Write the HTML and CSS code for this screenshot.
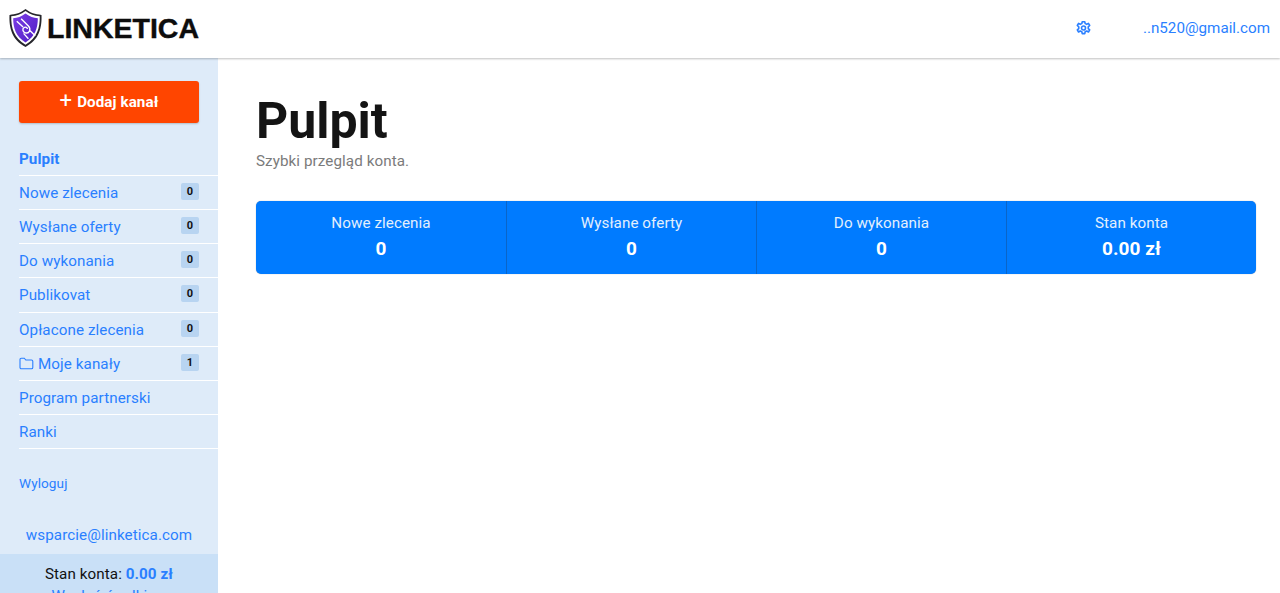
FILE: index.html
```html
<!DOCTYPE html>
<html lang="pl">
<head>
<meta charset="utf-8">
<title>Linketica - Pulpit</title>
<link rel="stylesheet" href="styles.css">
</head>
<body>
<header class="topbar">
  <a class="logo" href="#">
    <svg class="logo-mark" width="33" height="40" viewBox="0 0 34 40" aria-hidden="true">
      <defs><linearGradient id="sg" x1="0" y1="0" x2="1" y2="1"><stop offset="0" stop-color="#7c3fe6"/><stop offset="1" stop-color="#4f1cc4"/></linearGradient></defs>
      <path d="M17 .5 C22 4.500 27 6 33.500 6.500 C34 20 31 32 17 39.500 C3 32 0 20 .5 6.500 C7 6 12 4.500 17 .5Z" fill="#26262c"/>
      <path d="M17 2.500 C22 6 26 7.500 31.700 8 C31.900 20 29 30.500 17 37.300 C5 30.500 2.100 20 2.300 8 C8 7.500 12 6 17 2.500Z" fill="#fff"/>
      <path d="M17 5 C21.500 8.300 25 9.500 29.700 10 C29.700 20 27 28.700 17 35 C7 28.700 4.300 20 4.300 10 C9 9.500 12.500 8.300 17 5Z" fill="url(#sg)"/>
      <path d="M8 13 L14.500 19 M12.500 10.500 L20 18 C23 21 21 26 17 25 C14 24.300 13.500 21 15.500 19.500 C17 18.500 19 19.500 19 21 M21 22 L27 28 M15 25.500 L20 31" fill="none" stroke="#fff" stroke-width="1.400"/>
    </svg>
    <span class="logo-text">LINKETICA</span>
  </a>
  <div class="top-right">
    <svg class="gear" width="15" height="16" viewBox="0 0 24 24" fill="none" stroke="#2a7fff" stroke-width="2.600" stroke-linejoin="round" aria-hidden="true">
      <circle cx="12" cy="12" r="3.200"/>
      <path d="M10 2h4l.7 3 2.500 1.100 2.700-1.500 2 3.400-2.300 2.100v2.800l2.300 2.100-2 3.400-2.700-1.500-2.500 1.100-.7 3h-4l-.7-3-2.500-1.100-2.700 1.500-2-3.400 2.300-2.100v-2.800L2.100 8l2-3.400 2.700 1.500L9.300 5z"/>
    </svg>
    <a class="user-mail" href="#">..n520@gmail.com</a>
  </div>
</header>
<div class="layout">
  <aside class="sidebar">
    <a class="add-btn" href="#"><span class="plus">+</span> Dodaj kanał</a>
    <nav class="nav">
      <a class="nav-item active" href="#">Pulpit</a>
      <a class="nav-item" href="#">Nowe zlecenia<span class="badge">0</span></a>
      <a class="nav-item" href="#">Wysłane oferty<span class="badge">0</span></a>
      <a class="nav-item" href="#">Do wykonania<span class="badge">0</span></a>
      <a class="nav-item" href="#">Publikovat<span class="badge">0</span></a>
      <a class="nav-item" href="#">Opłacone zlecenia<span class="badge">0</span></a>
      <a class="nav-item" href="#">
        <span class="with-icon">
          <svg width="15" height="13" viewBox="0 0 15 13" fill="none" stroke="#2a7fff" stroke-width="1.100" aria-hidden="true"><path d="M1 2.500a1.300 1.300 0 0 1 1.300-1.300h3l1.500 1.800h5.700A1.300 1.300 0 0 1 13.800 4.300v6.200a1.300 1.300 0 0 1-1.300 1.300H2.300A1.300 1.300 0 0 1 1 10.500z"/></svg>
          Moje kanały
        </span><span class="badge">1</span>
      </a>
      <a class="nav-item" href="#">Program partnerski</a>
      <a class="nav-item" href="#">Ranki</a>
    </nav>
    <a class="logout" href="#">Wyloguj</a>
    <a class="support" href="#">wsparcie@linketica.com</a>
    <div class="balance">
      <div>Stan konta: <strong>0.00 zł</strong></div>
      <a class="withdraw" href="#">Wypłać środki →</a>
    </div>
  </aside>
  <main class="content">
    <h1 class="title">Pulpit</h1>
    <p class="subtitle">Szybki przegląd konta.</p>
    <section class="stats">
      <div class="stat"><div class="stat-label">Nowe zlecenia</div><div class="stat-value">0</div></div>
      <div class="stat"><div class="stat-label">Wysłane oferty</div><div class="stat-value">0</div></div>
      <div class="stat"><div class="stat-label">Do wykonania</div><div class="stat-value">0</div></div>
      <div class="stat"><div class="stat-label">Stan konta</div><div class="stat-value">0.00 zł</div></div>
    </section>
  </main>
</div>
</body>
</html>
```

FILE: styles.css
```css
* { box-sizing: border-box; }
html, body { margin: 0; height: 593px; overflow: hidden; }
body { font-family: Roboto, "Noto Sans", sans-serif; font-size: 15.200px; letter-spacing: .08px; color: #111; background: #fff; }
a { color: #2a7fff; text-decoration: none; }

.topbar { position: relative; z-index: 2; height: 58px; display: flex; align-items: center; justify-content: space-between; padding: 0 10px 2px 9px; background: #fff; box-shadow: 0 1px 2px rgba(0,0,0,.25); }
.logo { display: flex; align-items: center; gap: 5px; }
.logo-mark { display: block; }
.logo-text { font-family: "Liberation Sans", Arial, sans-serif; font-weight: 700; font-size: 28.500px; letter-spacing: 0; color: #0d0d0d; -webkit-text-stroke: .4px #0d0d0d; }
.top-right { display: flex; align-items: center; gap: 52px; }
.gear { display: block; }
.user-mail { font-size: 15.200px; letter-spacing: 0; }

.layout { display: flex; height: 535px; }
.sidebar { width: 218px; flex: none; background: #deebf9; display: flex; flex-direction: column; padding-top: 23px; overflow: hidden; }
.add-btn { flex: none; margin: 0 19px; height: 42px; display: flex; align-items: center; justify-content: center; gap: 5px; background: #ff4500; color: #fff; font-weight: 700; font-size: 15.200px; border-radius: 3px; box-shadow: 0 1px 2px rgba(0,0,0,.2); }
.plus { font-weight: 400; font-size: 22px; line-height: 1; margin-top: -2px; }

.nav { flex: none; margin: 18.600px 0 0 19px; display: flex; flex-direction: column; }
.nav-item { height: 34.200px; padding-top: .8px; display: flex; align-items: center; justify-content: space-between; padding-right: 19px; border-bottom: 1px solid #fff; }
.active { font-weight: 700; }
.with-icon { display: flex; align-items: center; gap: 4px; }
.badge { width: 18px; height: 17px; display: flex; align-items: center; justify-content: center; background: #b8d4f1; color: #111; font-size: 11px; font-weight: 700; border-radius: 2px; margin-bottom: 3px; }

.logout { flex: none; margin: 26px 0 0 19px; font-size: 13.600px; line-height: 16px; }
.support { flex: none; margin-top: 35px; text-align: center; font-size: 15.200px; line-height: 19px; }
.balance { margin-top: 9px; flex: 1; background: #c9e0f7; text-align: center; padding-top: 9.500px; font-size: 15.200px; line-height: 21px; }
.balance strong { color: #2a7fff; }
.withdraw { display: block; margin-top: 1px; }

.content { flex: 1; padding: 32px 24px 0 38px; }
.title { margin: 0; font-size: 50px; line-height: 62px; font-weight: 700; letter-spacing: 0; color: #141414; }
.subtitle { margin: 0; font-size: 15.200px; line-height: 19px; color: #7b7b7b; }
.stats { margin-top: 30px; height: 73px; display: grid; grid-template-columns: repeat(4, 1fr); background: #007bff; border-radius: 5px; color: #fff; box-shadow: 0 0 1px rgba(0,0,0,.4); }
.stat { display: flex; flex-direction: column; align-items: center; padding-top: 13px; border-left: 1px solid #0a65c8; }
.stat:first-child { border-left: 0; }
.stat-label { font-size: 15.200px; line-height: 19px; color: #e3effd; }
.stat-value { margin-top: 4px; font-size: 19px; line-height: 24px; font-weight: 700; }
```
